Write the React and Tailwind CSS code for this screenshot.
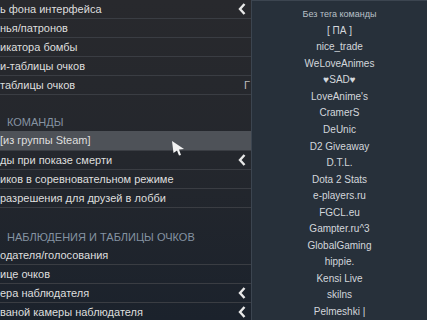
import React from "react";

const Chevron = () => (
  <svg width="8" height="12" viewBox="0 0 8 12" className="shrink-0">
    <path d="M6.5 1 L2 6 L6.5 11" fill="none" stroke="#e8e8e8" strokeWidth="2.4" strokeLinejoin="miter" />
  </svg>
);

const Row = ({ text, chevron, highlight, extra, h = "h-[19px]" }) => (
  <div
    className={`${h} flex items-center border-b border-[#3a3d43] pr-[5px] ${highlight ? "bg-[#4e5258]" : ""}`}
  >
    <span className="flex-1 whitespace-nowrap text-[11px] leading-none text-[#dedede]">{text}</span>
    {chevron && <Chevron />}
    {extra}
  </div>
);

const Header = ({ text, top }) => (
  <div className={`${top} flex h-[17px] items-center pl-[7px] text-[11px] uppercase leading-none text-[#8593a2]`}>
    {text}
  </div>
);

const teams = [
  "[ ПА ]",
  "nice_trade",
  "WeLoveAnimes",
  "♥SAD♥",
  "LoveAnime's",
  "CramerS",
  "DeUnic",
  "D2 Giveaway",
  "D.T.L.",
  "Dota 2 Stats",
  "e-players.ru",
  "FGCL.eu",
  "Gampter.ru^3",
  "GlobalGaming",
  "hippie.",
  "Kensi Live",
  "skilns",
  "Pelmeshki |",
];

export default function App() {
  return (
    <div
      className="flex h-[320px] w-[427px] overflow-hidden bg-gradient-to-b from-[#28292d] via-[#24272d] to-[#1b222c]"
      style={{ fontFamily: '"Liberation Sans", Arial, sans-serif' }}
    >
      <div className="relative w-[251px] shrink-0">
        <Row text="ь фона интерфейса" chevron />
        <Row text="нья/патронов" />
        <Row text="икатора бомбы" />
        <Row text="и-таблицы очков" />
        <Row
          text="таблицы очков"
          extra={<span className="mr-[-4px] text-[11px] leading-none text-[#bdbdbd]">Г</span>}
        />
        <Header text="КОМАНДЫ" top="mt-[19px]" />
        <Row text="[из группы Steam]" highlight h="h-[20px]" />
        <Row text="ды при показе смерти" chevron />
        <Row text="иков в соревновательном режиме" />
        <Row text="разрешения для друзей в лобби" />
        <Header text="НАБЛЮДЕНИЯ И ТАБЛИЦЫ ОЧКОВ" top="mt-[21px]" />
        <Row text="одателя/голосования" />
        <Row text="ице очков" />
        <Row text="ера наблюдателя" chevron />
        <Row text="ваной камеры наблюдателя" chevron />
        <svg
          width="14"
          height="16"
          viewBox="0 0 14 16"
          className="absolute left-[171px] top-[140px]"
        >
          <path d="M1 1 L13 9 L8 9.5 L10 15 L8 15.5 L6 10.5 L2.5 13 Z" fill="#f2f2f2" />
        </svg>
      </div>
      <div className="flex flex-1 flex-col items-center border-l border-t border-[#3c4550] bg-[#27303a] pt-[5px]">
        <div className="flex h-[16.55px] items-center text-[9px] leading-none text-[#b9c0c8]">Без тега команды</div>
        {teams.map((t) => (
          <div key={t} className="flex h-[16.55px] items-center whitespace-nowrap text-[10px] leading-none text-[#d3d7dc]">
            {t}
          </div>
        ))}
      </div>
    </div>
  );
}
